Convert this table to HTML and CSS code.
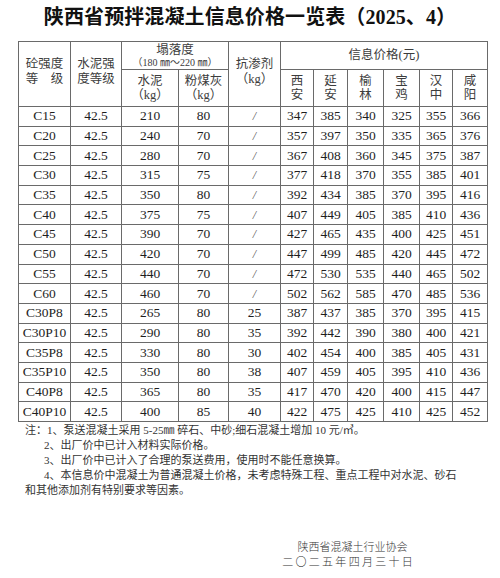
FILE: index.html
```html
<!DOCTYPE html>
<html lang="zh-CN">
<head>
<meta charset="utf-8">
<title>陕西省预拌混凝土信息价格一览表</title>
<link rel="stylesheet" href="styles.css">
</head>
<body>
<div class="page">
  <h1 class="title">陕西省预拌混凝土信息价格一览表（2025、4）</h1>
  <table class="price">
    <colgroup>
      <col class="c1"><col class="c2"><col class="c3"><col class="c4"><col class="c5">
      <col class="p1"><col class="p2"><col class="p3"><col class="p4"><col class="p5"><col class="p6">
    </colgroup>
    <thead>
      <tr class="h1">
        <th rowspan="2" class="cj up">砼强度<br>等　级</th>
        <th rowspan="2" class="cj up">水泥强<br>度等级</th>
        <th colspan="2" class="cj slump"><div class="sl1">塌落度</div><div class="range">（180 ㎜～220 ㎜）</div></th>
        <th rowspan="2" class="cj up">抗渗剂<br>（kg）</th>
        <th colspan="6" class="cj info">信息价格(元)</th>
      </tr>
      <tr class="h2">
        <th class="cj sub">水泥<br>（kg）</th>
        <th class="cj sub">粉煤灰<br>（kg）</th>
        <th class="cj sub">西<br>安</th>
        <th class="cj sub">延<br>安</th>
        <th class="cj sub">榆<br>林</th>
        <th class="cj sub">宝<br>鸡</th>
        <th class="cj sub">汉<br>中</th>
        <th class="cj sub">咸<br>阳</th>
      </tr>
    </thead>
    <tbody>
      <tr><td>C15</td><td>42.5</td><td>210</td><td>80</td><td class="sl">/</td><td>347</td><td>385</td><td>340</td><td>325</td><td>355</td><td>366</td></tr>
      <tr><td>C20</td><td>42.5</td><td>240</td><td>70</td><td class="sl">/</td><td>357</td><td>397</td><td>350</td><td>335</td><td>365</td><td>376</td></tr>
      <tr><td>C25</td><td>42.5</td><td>280</td><td>70</td><td class="sl">/</td><td>367</td><td>408</td><td>360</td><td>345</td><td>375</td><td>387</td></tr>
      <tr><td>C30</td><td>42.5</td><td>315</td><td>75</td><td class="sl">/</td><td>377</td><td>418</td><td>370</td><td>355</td><td>385</td><td>401</td></tr>
      <tr><td>C35</td><td>42.5</td><td>350</td><td>80</td><td class="sl">/</td><td>392</td><td>434</td><td>385</td><td>370</td><td>395</td><td>416</td></tr>
      <tr><td>C40</td><td>42.5</td><td>375</td><td>75</td><td class="sl">/</td><td>407</td><td>449</td><td>405</td><td>385</td><td>410</td><td>436</td></tr>
      <tr><td>C45</td><td>42.5</td><td>390</td><td>70</td><td class="sl">/</td><td>427</td><td>465</td><td>435</td><td>400</td><td>425</td><td>451</td></tr>
      <tr><td>C50</td><td>42.5</td><td>420</td><td>70</td><td class="sl">/</td><td>447</td><td>499</td><td>485</td><td>420</td><td>445</td><td>472</td></tr>
      <tr><td>C55</td><td>42.5</td><td>440</td><td>70</td><td class="sl">/</td><td>472</td><td>530</td><td>535</td><td>440</td><td>465</td><td>502</td></tr>
      <tr><td>C60</td><td>42.5</td><td>460</td><td>70</td><td class="sl">/</td><td>502</td><td>562</td><td>585</td><td>470</td><td>485</td><td>536</td></tr>
      <tr><td>C30P8</td><td>42.5</td><td>265</td><td>80</td><td>25</td><td>387</td><td>437</td><td>385</td><td>370</td><td>395</td><td>415</td></tr>
      <tr><td>C30P10</td><td>42.5</td><td>290</td><td>80</td><td>35</td><td>392</td><td>442</td><td>390</td><td>380</td><td>400</td><td>421</td></tr>
      <tr><td>C35P8</td><td>42.5</td><td>330</td><td>80</td><td>30</td><td>402</td><td>454</td><td>400</td><td>385</td><td>405</td><td>431</td></tr>
      <tr><td>C35P10</td><td>42.5</td><td>350</td><td>80</td><td>38</td><td>407</td><td>459</td><td>405</td><td>395</td><td>410</td><td>436</td></tr>
      <tr><td>C40P8</td><td>42.5</td><td>365</td><td>80</td><td>35</td><td>417</td><td>470</td><td>420</td><td>400</td><td>415</td><td>447</td></tr>
      <tr><td>C40P10</td><td>42.5</td><td>400</td><td>85</td><td>40</td><td>422</td><td>475</td><td>425</td><td>410</td><td>425</td><td>452</td></tr>
    </tbody>
  </table>
  <div class="notes">
    <p class="n0">注：1、泵送混凝土采用 5-25㎜ 碎石、中砂;细石混凝土增加 10 元/㎥。</p>
    <p class="ni">2、出厂价中已计入材料实际价格。</p>
    <p class="ni">3、出厂价中已计入了合理的泵送费用，使用时不能任意换算。</p>
    <p class="ni">4、本信息价中混凝土为普通混凝土价格，未考虑特殊工程、重点工程中对水泥、砂石</p>
    <p class="n0">和其他添加剂有特别要求等因素。</p>
  </div>
  <div class="sign">
    <div class="org">陕西省混凝土行业协会</div>
    <div class="date">二〇二五年四月三十日</div>
  </div>
</div>
</body>
</html>
```

FILE: styles.css
```css
html, body {
  margin: 0;
  padding: 0;
  background: #ffffff;
}

.page {
  width: 500px;
  height: 578px;
  font-family: "Liberation Serif", "Noto Sans CJK SC", serif;
  color: #1a1a1a;
  overflow: hidden;
}

.title {
  margin: 0;
  padding-top: 5px;
  height: 36px;
  font-family: "Liberation Serif", "Noto Sans CJK SC", serif;
  font-size: 20px;
  line-height: 24px;
  font-weight: bold;
  text-align: center;
  color: #111;
  letter-spacing: 0.1px;
}

.price {
  margin-left: 18px;
  width: 469px;
  table-layout: fixed;
  border-collapse: collapse;
  font-size: 13px;
  color: #222;
}

.c1 { width: 52px; }
.c2 { width: 51px; }
.c3 { width: 57px; }
.c4 { width: 50px; }
.c5 { width: 52px; }
.p1 { width: 33px; }
.p2 { width: 34px; }
.p3 { width: 36px; }
.p4 { width: 36px; }
.p5 { width: 33px; }
.p6 { width: 35px; }

.price th,
.price td {
  border: 1px solid #6a6a6a;
  padding: 0;
  text-align: center;
  vertical-align: middle;
  white-space: nowrap;
}

.price th {
  font-weight: normal;
}

.cj {
  font-family: "Liberation Serif", "Noto Sans CJK SC", serif;
  font-weight: 300;
  color: #3c3c3c;
  font-size: 12.5px;
  line-height: 15px;
}

.up {
  padding-bottom: 5px !important;
}

.h1 { height: 28px; }
.h2 { height: 37px; }

.sl1 {
  line-height: 14px;
}

.range {
  font-size: 10px;
  line-height: 12px;
  letter-spacing: 0;
}

.info {
  font-size: 12.5px;
}

.sub {
  line-height: 14.5px;
}

.price tbody tr {
  height: 19.7px;
}

.price td {
  font-size: 13.5px;
  line-height: 18px;
  color: #1e1e1e;
}

.price td.sl {
  color: #555;
  font-size: 12px;
  font-style: italic;
}

.notes {
  margin-top: 1px;
  padding-left: 25px;
  font-family: "Liberation Serif", "Noto Sans CJK SC", serif;
  font-size: 11px;
  line-height: 15px;
  color: #333;
}

.notes p {
  margin: 0;
  white-space: nowrap;
}

.notes .ni {
  padding-left: 19px;
}

.sign {
  margin-top: 42px;
  padding-left: 282px;
  width: 131px;
  display: flex;
  flex-direction: column;
  align-items: center;
  font-family: "Liberation Serif", "Noto Sans CJK SC", serif;
  font-weight: 300;
  font-size: 11px;
  line-height: 15px;
  color: #333;
}

.org {
  margin-left: 10px;
}

.date {
  letter-spacing: 2.3px;
  margin-right: -2.3px;
}
```
